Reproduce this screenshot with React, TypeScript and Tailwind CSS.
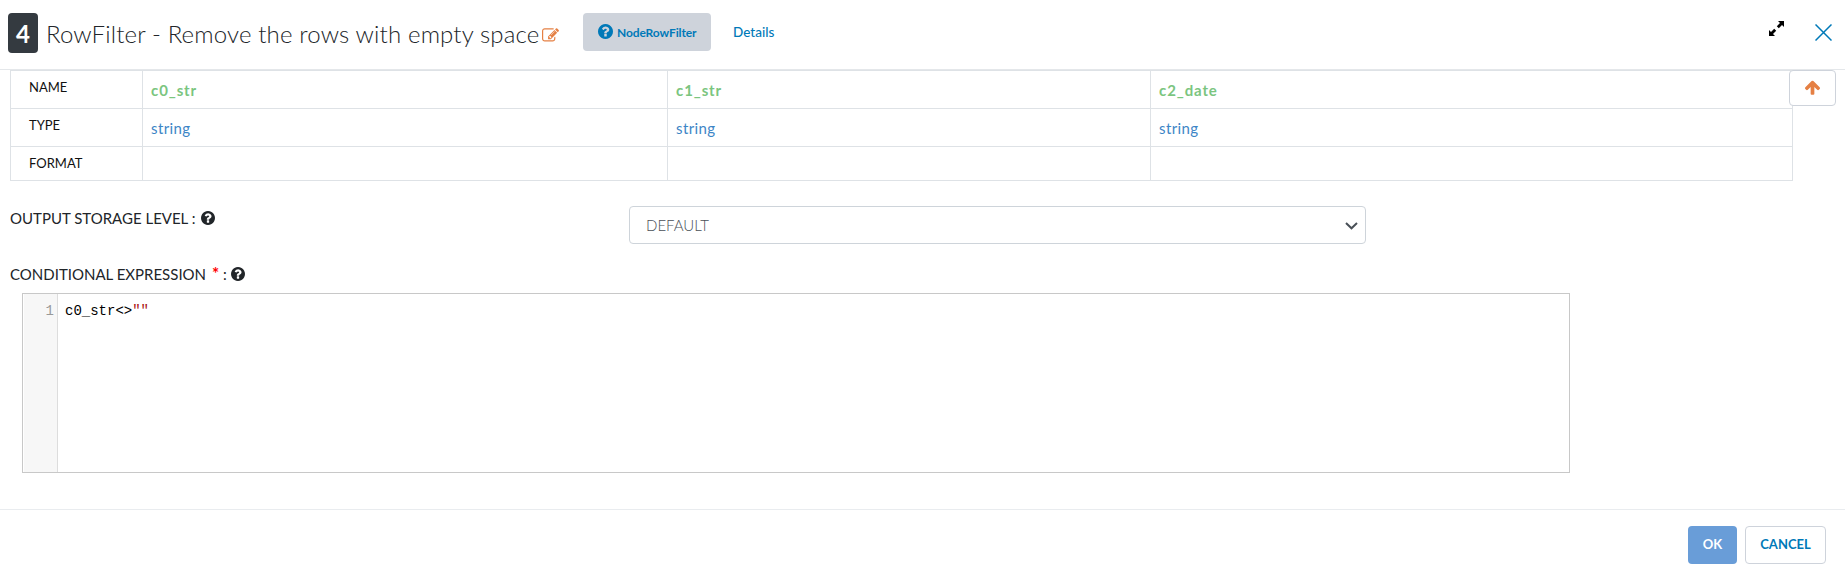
const PENCIL =
  'M888 1184l116-116-152-152-116 116v56h96v96h56zm440-720q-16-16-33 1l-350 350q-17 17-1 33t33-1l350-350q17-17 1-33zm80 594v190q0 119-84.5 203.5t-203.5 84.5h-832q-119 0-203.5-84.5t-84.5-203.5v-832q0-119 84.5-203.5t203.5-84.5h832q63 0 117 25 15 7 18 23 3 17-9 29l-49 49q-14 14-32 8-23-6-45-6h-832q-66 0-113 47t-47 113v832q0 66 47 113t113 47h832q66 0 113-47t47-113v-126q0-13 9-22l64-64q15-15 35-7t20 29zm-96-738l288 288-672 672h-288v-288zm444 132l-92 92-288-288 92-92q28-28 68-28t68 28l152 152q28 28 28 68t-28 68z';
const ARROW_UP =
  'M1675 971q0 51-37 90l-75 75q-38 38-91 38-54 0-90-38l-294-293v704q0 52-37.5 84.5t-90.5 32.5h-128q-53 0-90.5-32.5t-37.5-84.5v-704l-294 293q-36 38-90 38t-90-38l-75-75q-38-38-38-90 0-53 38-91l651-651q35-37 90-37 54 0 91 37l651 651q37 39 37 91z';
const QUESTION =
  'M1024 1376v-192q0-14-9-23t-23-9h-192q-14 0-23 9t-9 23v192q0 14 9 23t23 9h192q14 0 23-9t9-23zm256-672q0-88-55.5-163t-138.5-116-170-41q-243 0-371 213-15 24 8 42l132 100q7 6 19 6 16 0 25-12 53-68 86-92 34-24 86-24 48 0 85.5 26t37.5 59q0 38-20 61t-68 45q-63 28-115.5 86.5t-52.5 125.5v36q0 14 9 23t23 9h192q14 0 23-9t9-23q0-19 21.5-49.5t54.5-49.5q32-18 49-28.5t46-35 44.5-48 28-60.5 12.5-81zm384 192q0 209-103 385.5t-279.5 279.5-385.5 103-385.5-103-279.5-279.5-103-385.5 103-385.5 279.5-279.5 385.5-103 385.5 103 279.5 279.5 103 385.5z';

function Icon({ path, box = '0 0 1792 1792', className }: { path: string; box?: string; className: string }) {
  return (
    <svg viewBox={box} fill="currentColor" className={className}>
      <path d={path} />
    </svg>
  );
}

function Header() {
  return (
    <header className="flex h-[70px] shrink-0 items-start border-b border-[#e4e7ea] pl-2">
      <span className="mt-[13px] flex h-10 w-[30px] items-center justify-center rounded bg-[#343a40] pt-[2px] text-2xl font-bold text-white">
        4
      </span>
      <h1 className="mt-[16px] ml-[8px] w-[495px] whitespace-nowrap text-[24px] leading-9 font-light tracking-[0.15px] text-[#212529]">
        RowFilter - Remove the rows with empty space
      </h1>
      <Icon path={PENCIL} box="0 128 1792 1536" className="mt-[28px] ml-[1px] h-[15px] w-[17px] text-[#e58044]" />
      <button className="mt-[13px] ml-[24px] flex h-[38px] w-32 items-center rounded bg-[#ced3db] pl-[15px] text-[#0079b8]">
        <Icon path={QUESTION} box="128 128 1536 1536" className="-mt-[2px] h-[15px] w-[15px]" />
        <span className="mt-px ml-[4px] text-xs font-bold tracking-[-0.1px] whitespace-nowrap">NodeRowFilter</span>
      </button>
      <a className="mt-[20px] ml-[22px] text-[13.5px] leading-6 font-medium text-[#0079b8]">Details</a>
      <svg viewBox="0 0 15 15" className="mt-[21px] mr-[31px] ml-auto h-[15px] w-[15px]" fill="#000">
        <path d="M9 0h6v6l-2-2-3.2 3.2-2-2L11 2zM0 9l2 2 3.2-3.2 2 2L4 13l2 2H0z" />
      </svg>
      <svg viewBox="0 0 17 17" className="mt-[24px] mr-[13px] h-[17px] w-[17px]" fill="none" stroke="#0079b8" strokeWidth="1.5">
        <path d="M.5.5l16 16M16.5.5l-16 16" />
      </svg>
    </header>
  );
}

const columns = [
  { name: 'c0_str', type: 'string' },
  { name: 'c1_str', type: 'string' },
  { name: 'c2_date', type: 'string' },
];

function Schema() {
  const label = 'border border-[#dee2e6] pl-[18px] pt-[6px] align-top text-[13px] leading-5 text-[#111]';
  const cell = 'border border-[#dee2e6] pl-2 pt-[7px] align-top text-[15px] leading-6';
  return (
    <div className="flex pl-[10px]">
      <table className="w-[1783px] shrink-0 table-fixed border-collapse">
        <colgroup>
          <col className="w-[132px]" />
          <col className="w-[525px]" />
          <col className="w-[483px]" />
          <col className="w-[642px]" />
        </colgroup>
        <tbody>
          <tr className="h-[38px]">
            <td className={label}>NAME</td>
            {columns.map((c) => (
              <td key={c.name} className={`${cell} font-bold tracking-[0.9px] text-[#7bc57f]`}>{c.name}</td>
            ))}
          </tr>
          <tr className="h-[38px]">
            <td className={label}>TYPE</td>
            {columns.map((c) => (
              <td key={c.name} className={`${cell} tracking-[0.4px] text-[#3d85c6]`}>{c.type}</td>
            ))}
          </tr>
          <tr className="h-[34px]">
            <td className={label}>FORMAT</td>
            {columns.map((c) => (
              <td key={c.name} className={cell} />
            ))}
          </tr>
        </tbody>
      </table>
      <button className="relative -ml-[4px] flex h-9 w-[47px] items-center justify-center rounded border border-[#ced3db] bg-white text-[#e58044]">
        <Icon path={ARROW_UP} box="117 128 1558 1540" className="-mt-[2px] h-[15px] w-[15px]" />
      </button>
    </div>
  );
}

export default function App() {
  return (
    <div className="flex h-[577px] w-[1845px] flex-col overflow-hidden bg-white font-['Lato',sans-serif] text-[#212529]">
      <Header />
      <main className="flex h-[440px] shrink-0 flex-col border-b border-[#e9ecef]">
        <Schema />
        <div className="mt-[25px] flex pl-[10px]">
          <label className="flex h-6 w-[619px] items-center text-[15px] whitespace-nowrap">
            <span className="w-[188px]">OUTPUT STORAGE LEVEL :</span>
            <Icon path={QUESTION} box="128 128 1536 1536" className="ml-[3px] h-[14px] w-[14px]" />
          </label>
          <div className="flex h-[38px] w-[737px] items-center justify-between rounded border border-[#ced4da] pr-[7px] pl-4 text-[#495057]">
            <span className="mt-px text-[15px] font-light">DEFAULT</span>
            <svg viewBox="0 0 13 8" className="mt-px h-2 w-[13px]" fill="none" stroke="#495057" strokeWidth="2">
              <path d="M1 1l5.5 5.3L12 1" />
            </svg>
          </div>
        </div>
        <label className="mt-[18px] flex h-6 items-center pl-[10px] text-[15px] whitespace-nowrap">
          <span className="w-[197px]">CONDITIONAL EXPRESSION</span>
          <span className="ml-[5px] w-[7px] text-[17px] font-bold text-[#f00]">*</span>
          <span className="ml-[4px] w-[5px]">:</span>
          <Icon path={QUESTION} box="128 128 1536 1536" className="ml-[3px] h-[14px] w-[14px]" />
        </label>
        <div className="mt-[7px] ml-[22px] flex h-[180px] w-[1548px] border border-[#c8c8c8] pl-px font-['Liberation_Mono',monospace] text-[14px] leading-[21px]">
          <div className="w-[34px] border-r border-[#ddd] bg-[#f7f7f7] pt-[7px] pr-[3px] text-right text-[#999]">1</div>
          <pre className="pt-[7px] pl-[7px] font-['Liberation_Mono',monospace] text-black">
            c0_str&lt;&gt;<span className="text-[#a11]">""</span>
          </pre>
        </div>
      </main>
      <footer className="flex justify-end gap-2 pt-4 pr-[19px] text-[13px] font-bold">
        <button className="h-[38px] w-[49px] rounded bg-[#699dd8] text-white">OK</button>
        <button className="h-[38px] w-[81px] rounded border border-[#ced3db] text-[#0079b8]">CANCEL</button>
      </footer>
    </div>
  );
}
